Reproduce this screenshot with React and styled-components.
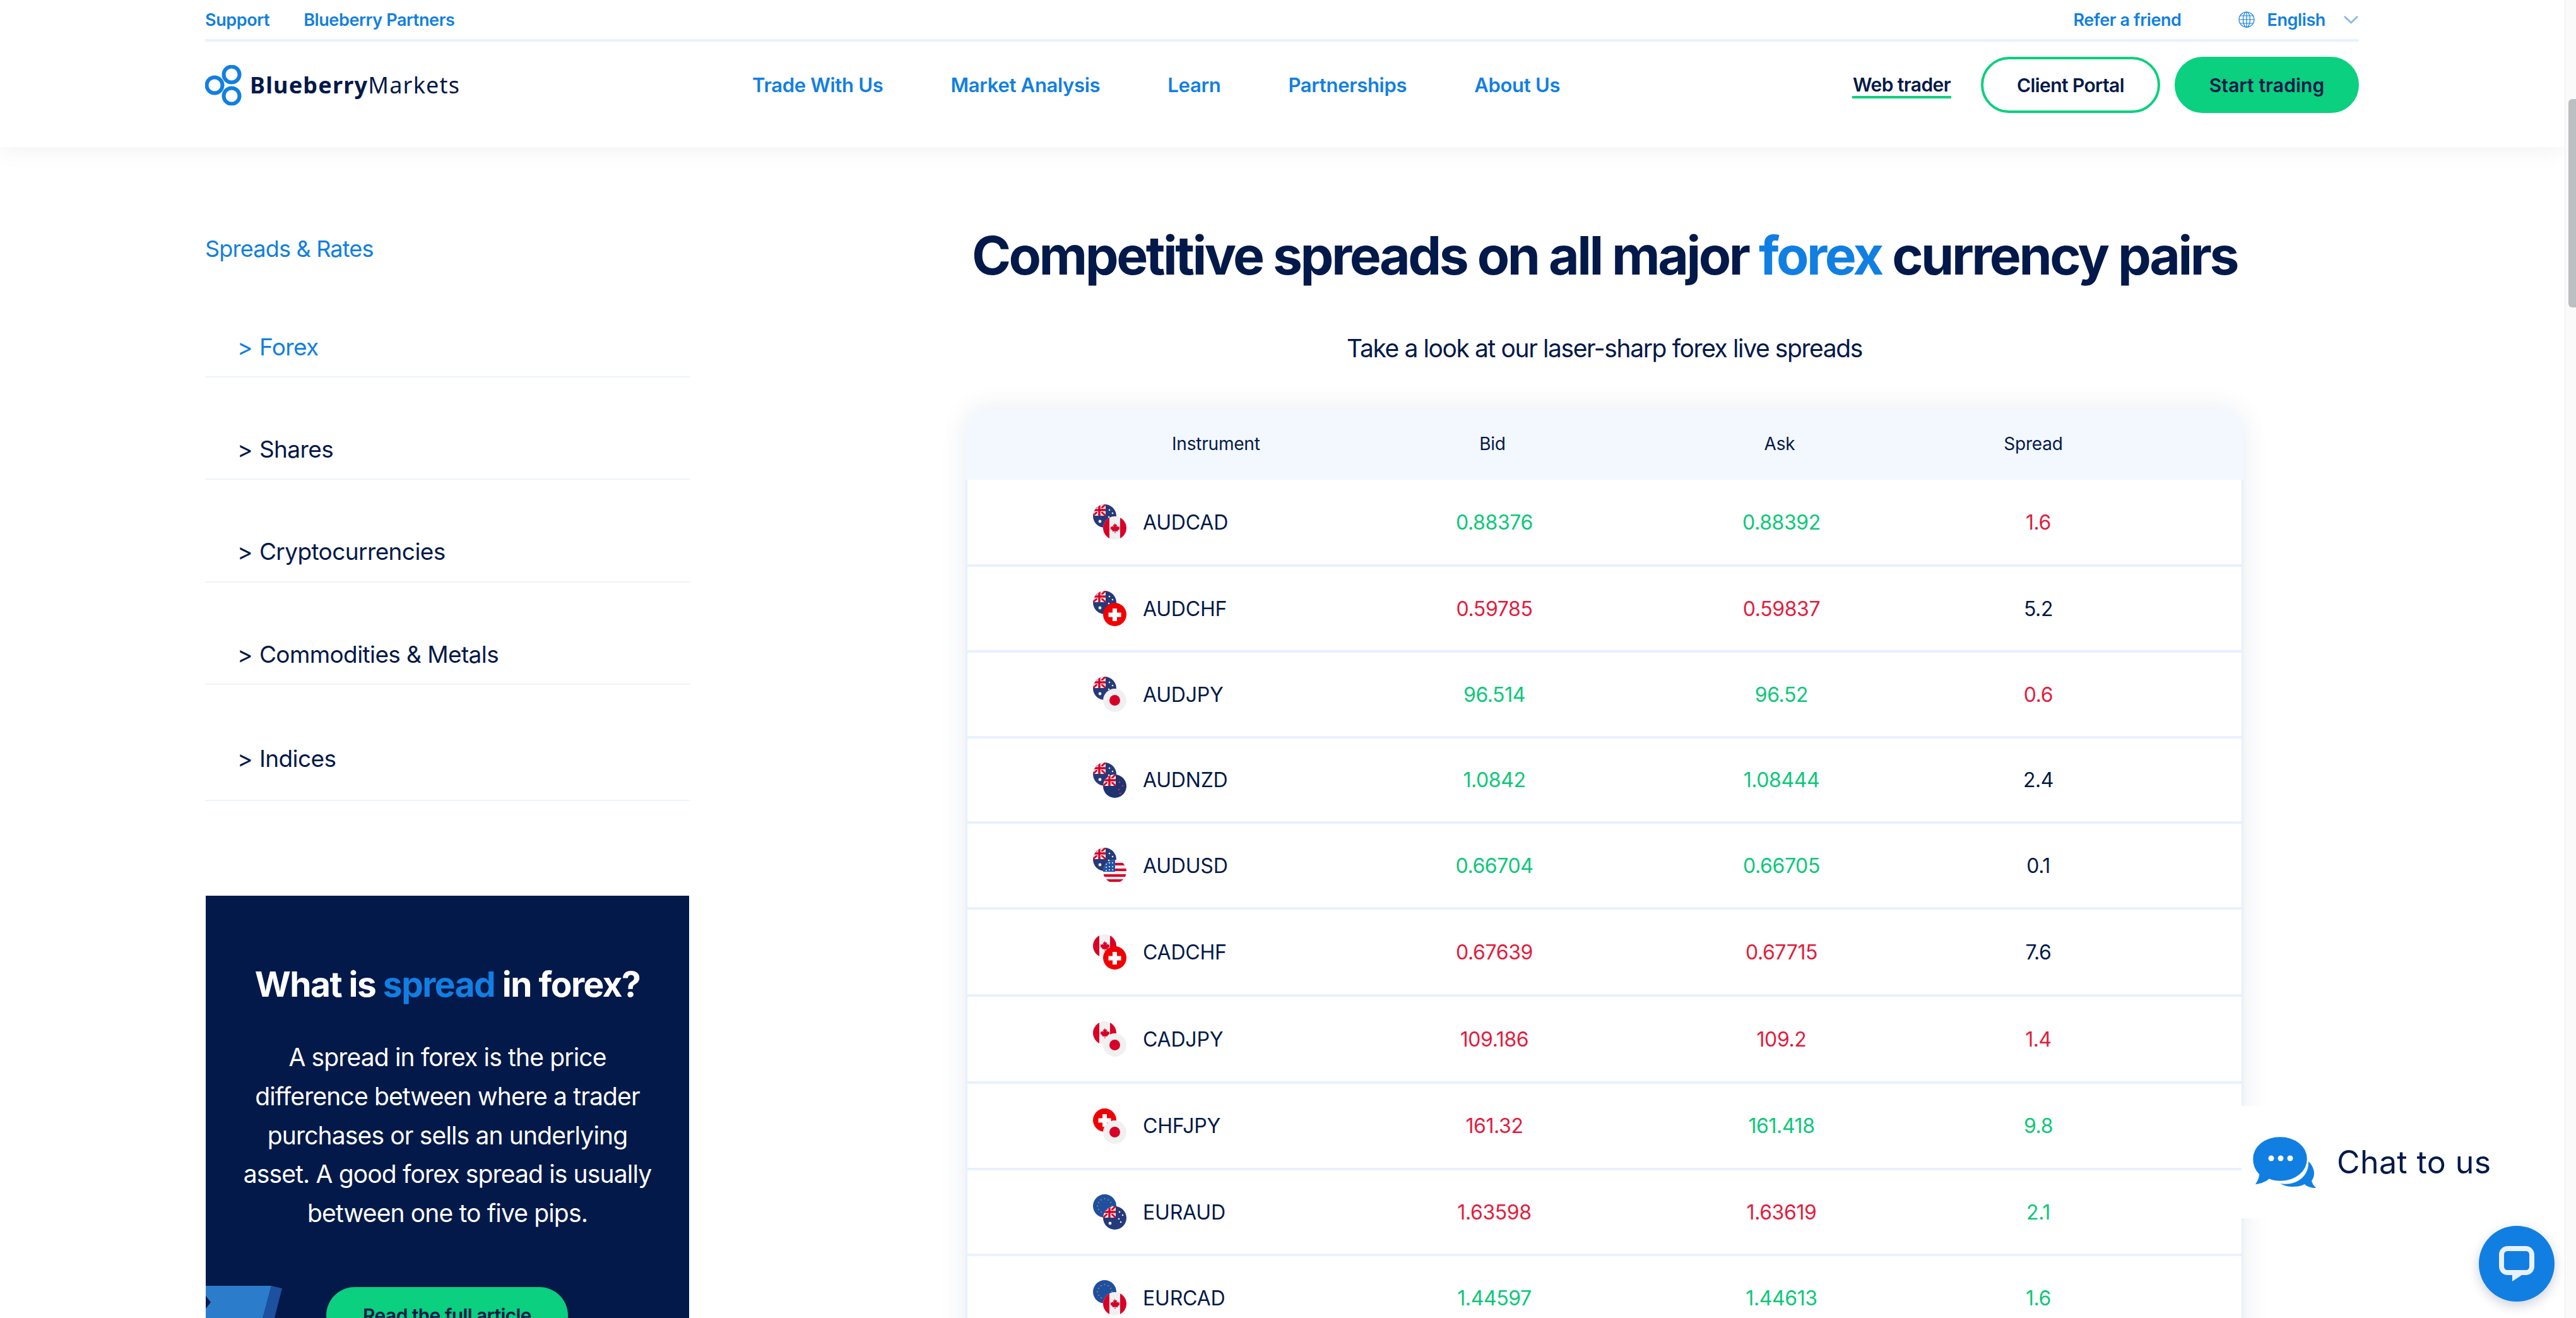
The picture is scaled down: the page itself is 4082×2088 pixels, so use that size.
import React, { useId } from 'react';
import styled, { createGlobalStyle } from 'styled-components';

const NAVY = '#03194a';
const BLUE = '#117fe2';
const GREEN = '#0ad07f';
const VALUE_GREEN = '#0bc878';
const RED = '#e31b3c';
const LINE = '#e8f1fd';
const SANS = "Inter, 'Noto Sans', sans-serif";

const GlobalStyle = createGlobalStyle`
  html, body {
    margin: 0;
    height: 2088px;
    overflow: hidden;
    background: #fff;
    font-family: ${SANS};
    color: ${NAVY};
  }
`;

const Page = styled.div`
  display: flex;
  width: 4082px;
  height: 2088px;
  overflow: hidden;
`;

const Main = styled.div`
  position: relative;
  width: 4064px;
  height: 2088px;
  overflow: hidden;
`;

const ScrollTrack = styled.div`
  width: 17px;
  border-left: 1px solid #ececec;
  background: #fafafa;
`;

const ScrollThumb = styled.div`
  width: 12px;
  height: 330px;
  margin: 157px 0 0 5px;
  border-radius: 6px 0 0 6px;
  background: #bcbec2;
`;

const Header = styled.header`
  position: relative;
  height: 233px;
  padding: 0 326px 0 325px;
  background: #fff;
  box-shadow: 0 0 40px rgba(3, 25, 74, 0.07);
`;

const TopBar = styled.div`
  display: flex;
  align-items: center;
  justify-content: space-between;
  height: 62px;
  border-bottom: 4px solid ${LINE};
`;

const TopGroup = styled.div`
  display: flex;
  align-items: center;
`;

const TopLink = styled.a`
  margin: 0 ${({ $mr }) => $mr || 0}px 0 ${({ $ml }) => $ml || 0}px;
  color: ${BLUE};
  font-size: 27px;
  font-weight: 600;
  letter-spacing: -0.4px;
  white-space: nowrap;
`;

const MainBar = styled.div`
  display: flex;
  align-items: center;
  height: 137px;
  margin-top: 0;
`;

const Logo = styled.div`
  display: flex;
  align-items: center;
  gap: 11px;
  width: 867px;
`;

const LogoText = styled.span`
  font-family: 'Noto Sans', sans-serif;
  font-size: 36px;
  letter-spacing: 1.2px;
  font-weight: 400;
  b {
    font-weight: 700;
  }
`;

const Nav = styled.nav`
  display: flex;
  gap: 107px;
  width: 1743px;
`;

const NavLink = styled.a`
  color: ${BLUE};
  font-size: 31px;
  font-weight: 600;
  letter-spacing: -0.3px;
  white-space: nowrap;
`;

const WebTrader = styled.a`
  width: 157px;
  margin-right: 47px;
  padding: 3px 0 0;
  border-bottom: 4px solid ${GREEN};
  font-size: 30px;
  font-weight: 600;
  letter-spacing: -0.6px;
  white-space: nowrap;
  text-align: center;
`;

const PillButton = styled.a`
  display: flex;
  align-items: center;
  justify-content: center;
  box-sizing: border-box;
  width: ${({ $w }) => $w}px;
  height: 89px;
  margin-left: ${({ $ml }) => $ml || 0}px;
  border: 4px solid ${GREEN};
  border-radius: 45px;
  background: ${({ $filled }) => ($filled ? GREEN : '#fff')};
  color: ${NAVY};
  font-size: 30px;
  font-weight: 600;
  letter-spacing: ${({ $ls }) => $ls || -0.6}px;
  white-space: nowrap;
`;

const Content = styled.div`
  display: grid;
  grid-template-columns: 768px 2025px;
  column-gap: 437px;
  padding: 0 0 0 325px;
`;

const Side = styled.aside`
  display: flex;
  flex-direction: column;
`;

const SideTitle = styled.div`
  height: 140px;
  padding-top: 139px;
  box-sizing: content-box;
  color: ${BLUE};
  font-size: 36px;
  line-height: 44px;
  letter-spacing: -0.8px;
  margin-bottom: -76px;
`;

const SideItem = styled.a`
  display: flex;
  align-items: center;
  gap: 11px;
  box-sizing: border-box;
  height: ${({ $h }) => $h}px;
  padding: ${({ $pt }) => $pt}px 0 0 51px;
  border-bottom: 2px solid #edf3fb;
  color: ${({ $active }) => ($active ? BLUE : NAVY)};
  font-size: 37px;
  letter-spacing: -0.6px;
`;

const SideCard = styled.div`
  position: relative;
  height: 700px;
  margin: 150px 1px 0;
  overflow: hidden;
  background: ${NAVY};
  color: #fff;
  text-align: center;
`;

const CardTitle = styled.h3`
  margin: 111px 0 0;
  font-size: 55px;
  font-weight: 700;
  line-height: 58px;
  letter-spacing: -1.5px;
  span {
    color: ${BLUE};
  }
`;

const CardText = styled.p`
  margin: 56px 0 0;
  font-size: 39px;
  line-height: 61.8px;
  letter-spacing: -0.85px;
`;

const CardButton = styled.a`
  display: flex;
  align-items: center;
  justify-content: center;
  box-sizing: border-box;
  width: 383px;
  height: 90px;
  margin: 86px 0 0 191px;
  border-radius: 45px;
  background: ${GREEN};
  color: ${NAVY};
  font-size: 30px;
  font-weight: 600;
  letter-spacing: -0.6px;
`;

const CardShape = styled.svg`
  position: absolute;
  left: 0;
  top: 618px;
`;

const Body = styled.main`
  display: flex;
  flex-direction: column;
  align-items: center;
`;

const Title = styled.h1`
  margin: 125px 0 0;
  font-size: 84px;
  font-weight: 700;
  line-height: 94px;
  letter-spacing: -3.5px;
  white-space: nowrap;
  span {
    color: ${BLUE};
  }
`;

const Subtitle = styled.p`
  margin: 76px 0 0;
  font-size: 39px;
  line-height: 48px;
  letter-spacing: -1.4px;
  white-space: nowrap;
`;

const Table = styled.div`
  align-self: stretch;
  margin-top: 72px;
  overflow: hidden;
  border-radius: 36px 36px 0 0;
  box-shadow: 0 0 40px rgba(20, 60, 120, 0.1);
`;

const Cols = styled.div`
  display: grid;
  grid-template-columns: 607px 456px 454px 360px 1fr;
  align-items: center;
  box-sizing: border-box;
`;

const HeadRow = styled(Cols)`
  height: 112px;
  padding-bottom: 2px;
  background: #f3f7fe;
  font-size: 28px;
  letter-spacing: -0.2px;
`;

const HeadCell = styled.div`
  padding: 0 ${({ $pr }) => $pr || 0}px 0 ${({ $pl }) => $pl || 0}px;
  text-align: ${({ $left }) => ($left ? 'left' : 'center')};
`;

const Row = styled(Cols)`
  height: ${({ $h }) => $h}px;
  border-bottom: 4px solid ${LINE};
  border-left: 3px solid ${LINE};
  border-right: 3px solid ${LINE};
  background: #fff;
`;

const Instrument = styled.div`
  display: flex;
  align-items: center;
  gap: 25px;
  padding-left: 199px;
  font-size: 32px;
  letter-spacing: -0.2px;
`;

const Value = styled.div`
  color: ${({ $c }) => $c};
  font-size: 32px;
  font-weight: 400;
  letter-spacing: -0.4px;
  text-align: center;
`;

const ChatPanel = styled.div`
  position: absolute;
  left: 3552px;
  top: 1752px;
  display: flex;
  align-items: center;
  gap: 30px;
  box-sizing: border-box;
  width: 512px;
  height: 178px;
  padding: 0 0 0 17px;
  background: #fff;
  font-size: 50px;
  letter-spacing: 0.4px;
`;

const ChatButton = styled.div`
  position: absolute;
  left: 3928px;
  top: 1942px;
  display: flex;
  align-items: center;
  justify-content: center;
  width: 120px;
  height: 120px;
  border-radius: 50%;
  background: ${BLUE};
  box-shadow: 0 6px 18px rgba(3, 25, 74, 0.2);
`;

const Jack = () => (
  <g>
    <rect width="20" height="18" fill="#f0f0f0" />
    <path d="M0 0L20 18M20 0L0 18" stroke="#d80027" strokeWidth="3" />
    <path d="M10 0V18M0 9H20" stroke="#f0f0f0" strokeWidth="6" />
    <path d="M10 0V18M0 9H20" stroke="#d80027" strokeWidth="3.5" />
  </g>
);

const Dots = ({ items, fill, r = 1.3 }) =>
  items.map(([x, y]) => <circle key={`${x}-${y}`} cx={x} cy={y} r={r} fill={fill} />);

const flagArt = {
  AUD: (
    <>
      <rect width="37" height="37" fill="#253a7a" />
      <Jack />
      <Dots items={[[26, 9], [31, 14], [25, 20], [28, 25]]} fill="#f0f0f0" />
      <Dots items={[[11, 27]]} fill="#f0f0f0" r={2.4} />
    </>
  ),
  NZD: (
    <>
      <rect width="37" height="37" fill="#1f3371" />
      <Jack />
      <Dots items={[[26, 12], [31, 18], [25, 24], [27, 30]]} fill="#e8233f" />
    </>
  ),
  CAD: (
    <>
      <rect width="37" height="37" fill="#f0f0f0" />
      <rect width="10" height="37" fill="#d80027" />
      <rect x="27" width="10" height="37" fill="#d80027" />
      <path
        d="M18.5 10.5l1.7 3 1.8-.8-.5 4.2 2-1.8.6 1.7 2.3-.3-.7 2.5 1 .5-3.7 3 .4 1.6-3.9-.6v3.4h-1v-3.4l-3.9.6.4-1.6-3.7-3 1-.5-.7-2.5 2.3.3.6-1.7 2 1.8-.5-4.2 1.8.8z"
        fill="#d80027"
      />
    </>
  ),
  CHF: (
    <>
      <rect width="37" height="37" fill="#f00000" />
      <path d="M15 9h7v6.5h6.5v7H22V29h-7v-6.5H8.5v-7H15z" fill="#fff" />
    </>
  ),
  JPY: (
    <>
      <rect width="37" height="37" fill="#f0f0f0" />
      <circle cx="18.5" cy="18.5" r="8.5" fill="#d80027" />
    </>
  ),
  USD: (
    <>
      <rect width="37" height="37" fill="#f0f0f0" />
      <path d="M0 7h37M0 16h37M0 25h37M0 33h37" stroke="#d80027" strokeWidth="4" />
      <rect width="19" height="19" fill="#1f55a8" />
      <Dots
        items={[[5, 7], [10, 5], [15, 5], [5, 12], [10, 11], [15, 11], [5, 17], [10, 16], [15, 16]]}
        fill="#f0f0f0"
        r={1.1}
      />
    </>
  ),
  EUR: (
    <>
      <rect width="37" height="37" fill="#1f4fa0" />
      <Dots
        items={[[18.5, 7], [24, 9], [28, 13], [30, 18.5], [28, 24], [24, 28], [18.5, 30], [13, 28], [9, 24], [7, 18.5], [9, 13], [13, 9]]}
        fill="#f5c518"
        r={0.8}
      />
    </>
  ),
};

const FlagPair = ({ pair }) => {
  const id = useId();
  return (
    <svg width="54" height="56" viewBox="0 0 54 56">
      <defs>
        <clipPath id={id}>
          <circle cx="18.5" cy="18.5" r="18.5" />
        </clipPath>
      </defs>
      <g clipPath={`url(#${id})`}>{flagArt[pair.slice(0, 3)]}</g>
      <g transform="translate(16 19)">
        <g clipPath={`url(#${id})`}>{flagArt[pair.slice(3)]}</g>
      </g>
    </svg>
  );
};

const LogoMark = () => (
  <svg width="60" height="64" viewBox="0 0 60 64" fill="none" stroke={BLUE} strokeWidth="6">
    <circle cx="15" cy="32" r="12.5" />
    <circle cx="42" cy="15" r="12.5" />
    <circle cx="42" cy="49" r="12.5" />
  </svg>
);

const Globe = () => (
  <svg width="26" height="26" viewBox="0 0 26 26" fill="none" stroke={BLUE} strokeWidth="1.2">
    <circle cx="13" cy="13" r="12" />
    <ellipse cx="13" cy="13" rx="5.5" ry="12" />
    <path d="M13 1v24M1 13h24M3 7h20M3 19h20" />
  </svg>
);

const Chevron = () => (
  <svg width="25" height="14" viewBox="0 0 25 14" fill="none" stroke="#7fb4ee" strokeWidth="2.5">
    <path d="M2 2l10.5 10L23 2" />
  </svg>
);

const ChatBubbles = () => (
  <svg width="104" height="83" viewBox="0 0 104 83">
    <path
      d="M89 40c6 5 9 13 9 19 0 5-2 9-4 12 1 4 4 8 7 11-7 0-14-2-18-6-6 3-12 4-19 4-8 0-14-2-20-5 22 4 46-8 45-35z"
      fill={BLUE}
    />
    <path
      d="M44 0c24 0 44 15 44 36S68 72 44 72c-6 0-12-1-17-3-6 5-15 8-25 9 4-5 7-11 8-17C4 55 0 46 0 36 0 15 20 0 44 0z"
      fill={BLUE}
      stroke="#fff"
      strokeWidth="2.5"
    />
    <circle cx="30" cy="35" r="4.5" fill="#fff" />
    <circle cx="45" cy="35" r="4.5" fill="#fff" />
    <circle cx="60" cy="35" r="4.5" fill="#fff" />
  </svg>
);

const LiveChatIcon = () => (
  <svg width="56" height="56" viewBox="0 0 56 56">
    <path
      d="M14 0h28c8 0 14 6 14 14v18c0 8-6 14-14 14h-6L21 56V46h-7C6 46 0 40 0 32V14C0 6 6 0 14 0z"
      fill={LINE}
    />
    <path d="M14 8h28c4 0 6 2 6 6v18c0 4-2 6-6 6H14c-4 0-6-2-6-6V14c0-4 2-6 6-6z" fill={BLUE} />
    <path d="M21 38h14l-14 11z" fill={LINE} />
  </svg>
);

const sideItems = [
  { label: 'Forex', h: 162, pt: 66, active: true },
  { label: 'Shares', h: 162, pt: 66 },
  { label: 'Cryptocurrencies', h: 163, pt: 66 },
  { label: 'Commodities & Metals', h: 162, pt: 66 },
  { label: 'Indices', h: 184, pt: 50 },
];

const G = VALUE_GREEN;
const R = RED;
const N = NAVY;

const rows = [
  ['AUDCAD', '0.88376', G, '0.88392', G, '1.6', R, 138],
  ['AUDCHF', '0.59785', R, '0.59837', R, '5.2', N, 136],
  ['AUDJPY', '96.514', G, '96.52', G, '0.6', R, 136],
  ['AUDNZD', '1.0842', G, '1.08444', G, '2.4', N, 135],
  ['AUDUSD', '0.66704', G, '0.66705', G, '0.1', N, 136],
  ['CADCHF', '0.67639', R, '0.67715', R, '7.6', N, 138],
  ['CADJPY', '109.186', R, '109.2', R, '1.4', R, 138],
  ['CHFJPY', '161.32', R, '161.418', G, '9.8', G, 137],
  ['EURAUD', '1.63598', R, '1.63619', R, '2.1', G, 136],
  ['EURCAD', '1.44597', G, '1.44613', G, '1.6', G, 136],
];

export default function App() {
  return (
    <Page>
      <GlobalStyle />
      <Main>
        <Header>
          <TopBar>
            <TopGroup>
              <TopLink $mr={54}>Support</TopLink>
              <TopLink>Blueberry Partners</TopLink>
            </TopGroup>
            <TopGroup>
              <TopLink $mr={90}>Refer a friend</TopLink>
              <Globe />
              <TopLink $ml={20} $mr={28}>English</TopLink>
              <Chevron />
            </TopGroup>
          </TopBar>
          <MainBar>
            <Logo>
              <LogoMark />
              <LogoText><b>Blueberry</b>Markets</LogoText>
            </Logo>
            <Nav>
              <NavLink>Trade With Us</NavLink>
              <NavLink>Market Analysis</NavLink>
              <NavLink>Learn</NavLink>
              <NavLink>Partnerships</NavLink>
              <NavLink>About Us</NavLink>
            </Nav>
            <WebTrader>Web trader</WebTrader>
            <PillButton $w={284}>Client Portal</PillButton>
            <PillButton $w={292} $ml={23} $ls={0.1} $filled>Start trading</PillButton>
          </MainBar>
        </Header>
        <Content>
          <Side>
            <SideTitle>Spreads &amp; Rates</SideTitle>
            {sideItems.map((item) => (
              <SideItem key={item.label} $h={item.h} $pt={item.pt} $active={item.active}>
                <span>&gt;</span>
                {item.label}
              </SideItem>
            ))}
            <SideCard>
              <CardTitle>What is <span>spread</span> in forex?</CardTitle>
              <CardText>
                A spread in forex is the price<br />
                difference between where a trader<br />
                purchases or sells an underlying<br />
                asset. A good forex spread is usually<br />
                between one to five pips.
              </CardText>
              <CardButton>Read the full article</CardButton>
              <CardShape width="122" height="82" viewBox="0 0 122 82">
                <path d="M0 0H104L82 82H0z" fill="#2b7dcc" />
                <path d="M104 0l17 4-20 78H82z" fill="#1e50a0" />
                <path d="M0 16l8 10-8 10z" fill={NAVY} />
              </CardShape>
            </SideCard>
          </Side>
          <Body>
            <Title>
              Competitive spreads on all major <span>forex</span> currency pairs
            </Title>
            <Subtitle>Take a look at our laser-sharp forex live spreads</Subtitle>
            <Table>
              <HeadRow>
                <HeadCell $left $pl={327}>Instrument</HeadCell>
                <HeadCell>Bid</HeadCell>
                <HeadCell>Ask</HeadCell>
                <HeadCell $pr={10}>Spread</HeadCell>
              </HeadRow>
              {rows.map(([name, bid, bidC, ask, askC, spread, spreadC, h]) => (
                <Row key={name} $h={h}>
                  <Instrument>
                    <FlagPair pair={name} />
                    {name}
                  </Instrument>
                  <Value $c={bidC}>{bid}</Value>
                  <Value $c={askC}>{ask}</Value>
                  <Value $c={spreadC}>{spread}</Value>
                </Row>
              ))}
            </Table>
          </Body>
        </Content>
        <ChatPanel>
          <ChatBubbles />
          Chat to us
        </ChatPanel>
        <ChatButton>
          <LiveChatIcon />
        </ChatButton>
      </Main>
      <ScrollTrack>
        <ScrollThumb />
      </ScrollTrack>
    </Page>
  );
}
